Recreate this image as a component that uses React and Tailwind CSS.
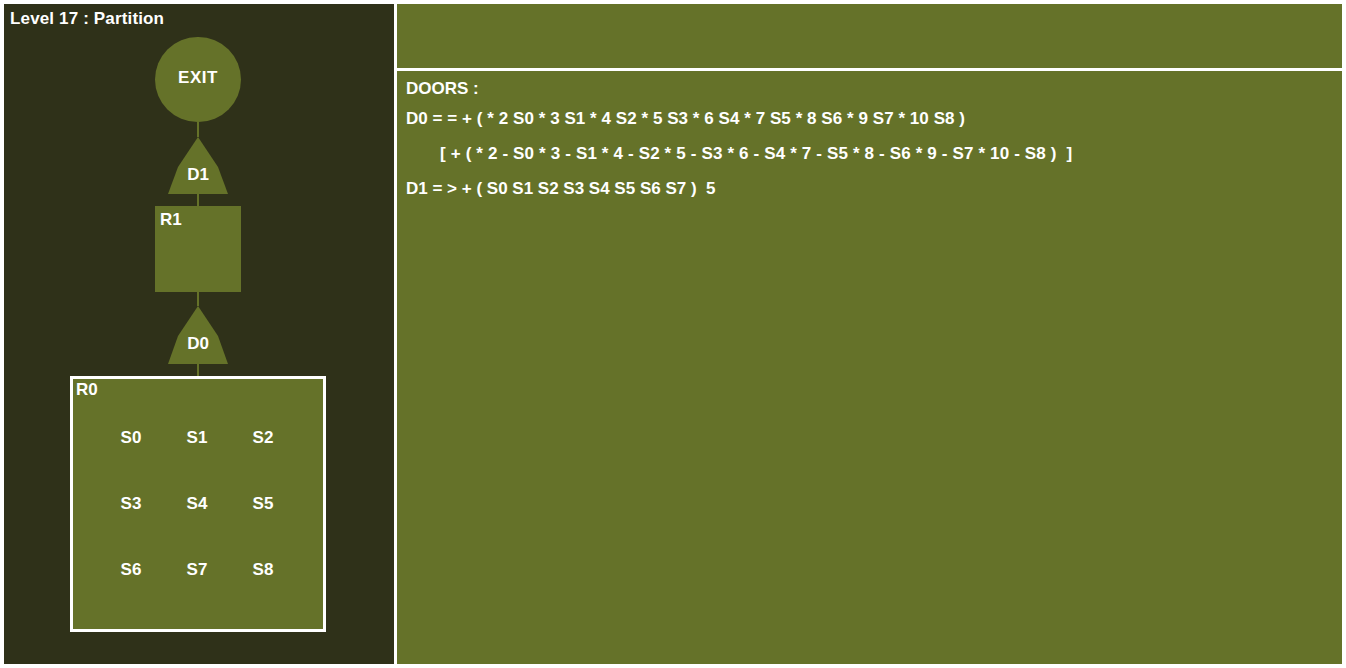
import React from 'react';

const font = { fontFamily: '"Liberation Sans", Arial, sans-serif' };

const Line = ({ h }) => <div className="w-[2px] bg-[#657229]" style={{ height: h }} />;

const Door = ({ label, h = 57 }) => (
    <div className="relative w-[60px] flex justify-center" style={{ height: h }}>
        <svg width="60" height={h} viewBox={`0 0 60 ${h}`} className="absolute inset-0">
            <polygon points={`30,0 10,30 0,${h} 60,${h} 50,30`} fill="#657229" />
        </svg>
        <span className="relative mt-[29px] text-[17px] leading-[18px] font-bold text-white">{label}</span>
    </div>
);

const sensors = ['S0', 'S1', 'S2', 'S3', 'S4', 'S5', 'S6', 'S7', 'S8'];

export default function App() {
    return (
        <div className="w-[1346px] h-[668px] bg-white p-1 flex gap-[3px] text-white font-bold" style={font}>
            <div className="w-[390px] bg-[#2f3119] flex flex-col">
                <div className="px-[6px] pt-[6px] text-[17px] leading-[18px] tracking-[0.15px]">Level 17 : Partition</div>
                <div className="flex flex-col items-center mt-[9px] pr-[2px]">
                    <div className="w-[86px] h-[85px] rounded-full bg-[#657229] flex items-center justify-center">
                        <span className="text-[17px] leading-[18px] tracking-[0.5px] -mt-[3px]">EXIT</span>
                    </div>
                    <Line h={15} />
                    <Door label="D1" h={57} />
                    <Line h={12} />
                    <div className="relative w-[86px] h-[86px] bg-[#657229]">
                        <span className="absolute left-[5px] top-[5px] text-[17px] leading-[18px]">R1</span>
                    </div>
                    <Line h={14} />
                    <Door label="D0" h={58} />
                    <Line h={12} />
                    <div className="relative w-[256px] h-[256px] border-[3px] border-white bg-[#657229] flex items-center justify-center">
                        <span className="absolute left-[3px] top-[2px] text-[17px] leading-[18px]">R0</span>
                        <div className="grid grid-cols-3 w-[198px]">
                            {sensors.map((s) => (
                                <div key={s} className="h-[66px] flex items-center justify-center text-[17px] leading-[18px] pr-[2px]">{s}</div>
                            ))}
                        </div>
                    </div>
                </div>
            </div>
            <div className="flex-1 flex flex-col gap-[3px]">
                <div className="h-[64px] bg-[#657229]" />
                <div className="flex-1 bg-[#657229] px-[9px] pt-[9px] text-[17px] leading-[18px]">
                    <div>DOORS :</div>
                    <div className="mt-[12px] whitespace-pre tracking-[0.05px]">D0 = = + ( * 2 S0 * 3 S1 * 4 S2 * 5 S3 * 6 S4 * 7 S5 * 8 S6 * 9 S7 * 10 S8 )</div>
                    <div className="mt-[17px] pl-[34px] whitespace-pre tracking-[0.15px]">[ + ( * 2 - S0 * 3 - S1 * 4 - S2 * 5 - S3 * 6 - S4 * 7 - S5 * 8 - S6 * 9 - S7 * 10 - S8 )  ]</div>
                    <div className="mt-[17px] whitespace-pre">D1 = &gt; + ( S0 S1 S2 S3 S4 S5 S6 S7 )  5</div>
                </div>
            </div>
        </div>
    );
}
